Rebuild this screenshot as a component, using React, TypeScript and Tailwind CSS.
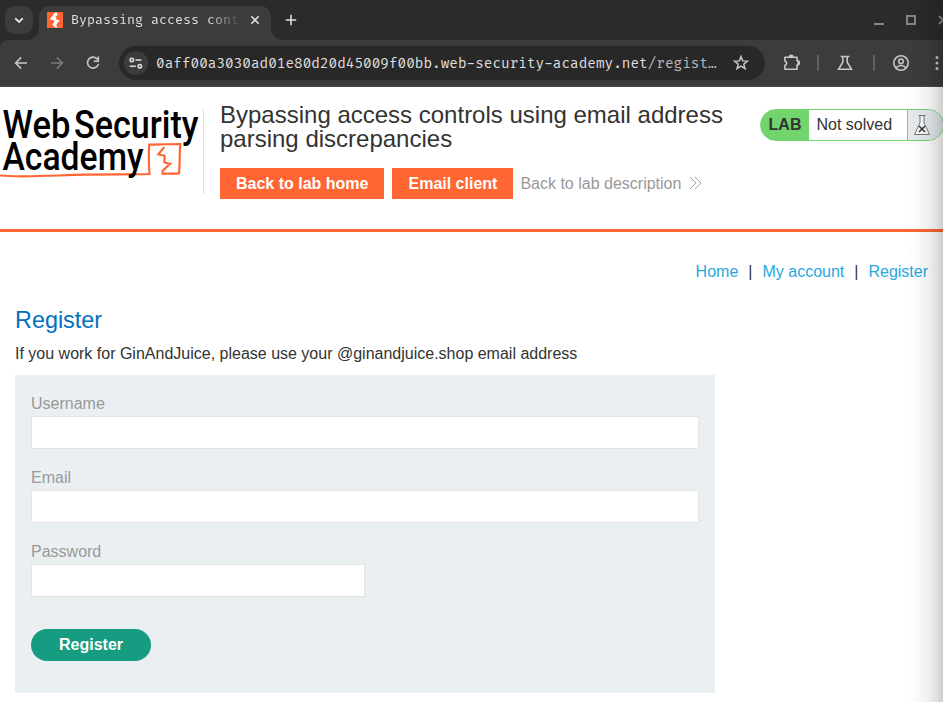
import type { ReactNode } from "react";

const mono = "font-['Fira_Code','DejaVu_Sans_Mono',monospace]";

function Icon({ size = 18, className = "", children }: { size?: number; className?: string; children: ReactNode }) {
  return (
    <svg
      width={size}
      height={size}
      viewBox="0 0 18 18"
      fill="none"
      stroke="currentColor"
      strokeWidth="1.6"
      className={"shrink-0 " + className}
    >
      {children}
    </svg>
  );
}

function TabStrip() {
  return (
    <div className="flex h-10 bg-[#2b2b2b] text-[#dedede]">
      <div className="ml-[5px] mt-[6px] flex h-7 w-7 items-center justify-center rounded-[10px] bg-[#3c3c3c]">
        <Icon>
          <path d="M5.2 7.2 9 10.9l3.800-3.700" strokeWidth="1.9" />
        </Icon>
      </div>
      <svg width="12" height="12" className="-ml-[6px] mt-7 shrink-0">
        <path d="M12 0a12 12 0 0 1-12 12h12z" fill="#3c3c3c" />
      </svg>
      <div className="flex h-[34px] mt-[6px] w-[232px] items-start rounded-t-[10px] bg-[#3c3c3c] pt-[5px] pl-2">
        <svg width="16" height="16" viewBox="0 0 16 16" className="mt-[1px] shrink-0">
          <rect width="16" height="16" fill="#ff6633" />
          <path d="M7.900.8 2.900 7.200 7.600 8.400 6.900 10.800 5.300 12.600 8.300 15.500H10.500L9.200 12.700 12.800 8.200 8.500 7.200 9.600 5.200 7.900 3.700H10.300V.8z" fill="#fff" />
        </svg>
        <div className={mono + " ml-2 h-[20px] w-[169px] shrink-0 text-[13px] leading-[19px] whitespace-nowrap [mask-image:linear-gradient(to_right,#000_137px,transparent_170px)]"}>
          Bypassing access cont
        </div>
        <Icon className="ml-[6px]">
          <path d="m5.300 5.300 7.400 7.400m0-7.400-7.400 7.400" />
        </Icon>
      </div>
      <svg width="12" height="12" className="mt-7 shrink-0">
        <path d="M0 0a12 12 0 0 0 12 12H0z" fill="#3c3c3c" />
      </svg>
      <Icon className="-ml-[1px] mt-[11px]">
        <path d="M9 3.800v10.400M3.800 9h10.400" />
      </Icon>
      <div className="ml-auto mr-[-9px] flex h-10 items-center gap-[14px] text-[#858585]">
        <Icon>
          <path d="M4 13h10" strokeWidth="2" />
        </Icon>
        <Icon>
          <path d="M5 5h8v8H5z" strokeWidth="2" />
        </Icon>
        <Icon>
          <path d="m5 5 8 8m0-8-8 8" strokeWidth="2" />
        </Icon>
      </div>
    </div>
  );
}

function Toolbar() {
  return (
    <div className="bg-[#2b2b2b]">
      <div className="flex h-[47px] items-center rounded-tl-lg border-b border-[#4a4a4a] bg-[#3c3c3c] text-[#c7c7c7]">
        <Icon className="ml-3">
          <path d="M15 9H4m5.200-5.600L3.600 9l5.600 5.600" />
        </Icon>
        <Icon className="ml-[18px] text-[#7b7b7b]">
          <path d="M3 9h11M8.800 3.400 14.400 9l-5.600 5.600" />
        </Icon>
        <Icon className="ml-[18px]">
          <path d="M13.700 5.700A5.500 5.500 0 1 0 14.400 9.800M14.300 2.600v4.600H9.700" />
        </Icon>
        <div className="ml-[17px] flex h-[34px] w-[646px] items-center rounded-full bg-[#282828] pl-[5px]">
          <div className="flex h-6 w-6 shrink-0 items-center justify-center rounded-full bg-[#3c3c3c]">
            <Icon className="text-[#dedede]">
              <circle cx="4.800" cy="6" r="1.700" />
              <circle cx="12.800" cy="12.200" r="1.700" />
              <path d="M8.500 6h6M2.800 12.200h6" />
            </Icon>
          </div>
          <div className={mono + " ml-2 w-[567px] shrink-0 pt-[2px] text-[14px] tracking-[0.01px] whitespace-nowrap text-[#dedede]"}>
            0aff00a3030ad01e80d20d45009f00bb.web-security-academy.net<span className="text-[#b8b8b8]">/regist…</span>
          </div>
          <Icon className="ml-[9px]">
            <path d="m9 2.600 1.700 4.300 4.700.3-3.600 3 1.200 4.500L9 12.200l-4 2.500 1.200-4.500-3.600-3 4.700-.3z" strokeWidth="1.500" />
          </Icon>
        </div>
        <Icon className="ml-[18px]" size={18}>
          <path d="M1.900 3.300H14v3.300a2.200 2.200 0 0 1 0 4.400v4.300H1.900v-3.900a2.200 2.200 0 0 0 0-4.300z" strokeLinejoin="round" />
          <path d="M6.500 3a1.700 1.700 0 0 1 3.400 0M14.400 7.200a1.700 1.700 0 0 1 0 3.400" fill="currentColor" />
        </Icon>
        <div className="ml-[16px] h-4 w-[2px] bg-[#616161]" />
        <Icon className="ml-[17px]">
          <path d="M4.600 2.500h8.800M6.800 2.500v5.700L2.600 15.200h12.800L11.200 8.200V2.500" />
        </Icon>
        <div className="ml-[19px] h-4 w-[2px] bg-[#616161]" />
        <Icon className="ml-[17px]">
          <circle cx="9" cy="9" r="7.200" />
          <circle cx="9" cy="7.300" r="2.300" />
          <path d="M4 13.800c2.500-3 7.500-3 10 0" />
        </Icon>
        <Icon className="ml-[18px] mr-[-9px]">
          <g fill="currentColor" stroke="none">
            <circle cx="9" cy="3.600" r="1.500" />
            <circle cx="9" cy="9" r="1.500" />
            <circle cx="9" cy="14.400" r="1.500" />
          </g>
        </Icon>
      </div>
    </div>
  );
}

function AcademyLogo() {
  return (
    <svg width="203" height="85" viewBox="0 0 203 85" className="shrink-0 overflow-visible">
      <path
        d="M0 66.500c22 2.200 55-.2 85-.8 26-.6 46 0 64.500-.700-.700-9-1-19-.2-29.300 10-.2 21-.700 31-.700-1 9-.2 19-1.300 29.300-5 .4-11 .3-16.500.4l.2-3 7.400-6.800-5.700-1.400.2-6.700-6.300-1.500 6-7.200"
        fill="none"
        stroke="#ff6633"
        strokeWidth="2.200"
      />
      <g fill="#000" fontFamily="Roboto, sans-serif" fontWeight="500" fontSize="38">
        <text x="2.500" y="28.500" textLength="68" lengthAdjust="spacingAndGlyphs">Web</text>
        <text x="74" y="28.500" textLength="124.500" lengthAdjust="spacingAndGlyphs">Security</text>
        <text x="2.500" y="60.800" textLength="141" lengthAdjust="spacingAndGlyphs">Academy</text>
      </g>
    </svg>
  );
}

function LabStatus() {
  return (
    <div className="mt-[22px] ml-auto flex h-8 w-[184px] shrink-0 -mr-[1px] overflow-hidden rounded-full border border-[#71d46d] bg-[linear-gradient(to_right,#71d46d_48px,#fff_48px)] text-[#333332]">
      <div className="flex w-12 items-center justify-center font-bold">LAB</div>
      <div className="flex w-[99px] items-center border-r border-[#71d46d] pl-[7.5px] pb-px">Not solved</div>
      <div className="flex flex-1 items-center bg-[#e5eaee] pl-[5px]">
        <svg width="18" height="22" viewBox="0 0 18 22" fill="#fafafa" stroke="#777" strokeWidth="1">
          <path d="M5.500 1.500h7M7 1.500v7L1.500 20.500h15L11 8.500v-7" />
          <path d="m6 12 6 6m0-6-6 6" stroke="#333" strokeWidth="1.500" />
        </svg>
      </div>
    </div>
  );
}

function LabHeader() {
  return (
    <header className="flex h-[145px] border-b-3 border-[#ff6633]">
      <div className="mt-[22px] flex h-[85px] border-r border-[#dfdfdf]">
        <AcademyLogo />
      </div>
      <div className="ml-4 pt-4">
        <h2 className="w-[520px] text-[24px] leading-6">Bypassing access controls using email address parsing discrepancies</h2>
        <div className="mt-[17px] flex h-[31px] items-center gap-2">
          <a className="bg-[#ff6633] px-4 leading-[31px] font-bold text-white">Back to lab home</a>
          <a className="bg-[#ff6633] px-4 leading-[31px] font-bold text-white">Email client</a>
          <a className="-ml-[1px] flex items-center text-[#999]">
            Back to lab description
            <svg width="14" height="14" viewBox="0 0 14 14" fill="none" stroke="#999" strokeWidth="0.9" className="ml-2 mb-[2px]">
              <path d="m1 1 6 6-6 6M6 1l6 6-6 6" />
            </svg>
          </a>
        </div>
      </div>
      <LabStatus />
    </header>
  );
}

function Field({ label, width }: { label: string; width: string }) {
  return (
    <label className="mb-[18px] block text-[#999]">
      <span className="block h-[23px] leading-[21px]">{label}</span>
      <input className={"block h-[33px] border border-[#e4e4e4] bg-white px-2 outline-none " + width} />
    </label>
  );
}

export default function App() {
  return (
    <div className="relative h-[702px] w-[943px] overflow-hidden bg-white font-['Liberation_Sans',Arial,sans-serif] text-[16px] leading-6 text-[#333332]">
      <TabStrip />
      <Toolbar />
      <LabHeader />
      <nav className="mt-7 mr-[15px] flex justify-end gap-[10px] leading-6 text-[#29a7de]">
        <a>Home</a>
        <span className="text-[#333332]">|</span>
        <a>My account</a>
        <span className="text-[#333332]">|</span>
        <a>Register</a>
      </nav>
      <main className="ml-[15px] w-[700px]">
        <h1 className="mt-[22px] text-[23.4px] leading-7 text-[#0071bc]">Register</h1>
        <p className="mt-[8px]">If you work for GinAndJuice, please use your @ginandjuice.shop email address</p>
        <form className="mt-[9px] h-[318px] bg-[#eaeff2] px-4 pt-[18px]">
          <Field label="Username" width="w-full" />
          <Field label="Email" width="w-full" />
          <Field label="Password" width="w-1/2" />
          <button type="button" className="mt-[14px] h-8 w-[120px] rounded-full bg-[#169c80] font-bold text-white">Register</button>
        </form>
      </main>
      <div className="pointer-events-none absolute inset-y-0 right-0 z-20 w-9 bg-[linear-gradient(to_right,transparent,rgba(0,0,0,0.015)_25%,rgba(0,0,0,0.06)_58%,rgba(0,0,0,0.12)_82%,rgba(0,0,0,0.2))]" />
    </div>
  );
}
